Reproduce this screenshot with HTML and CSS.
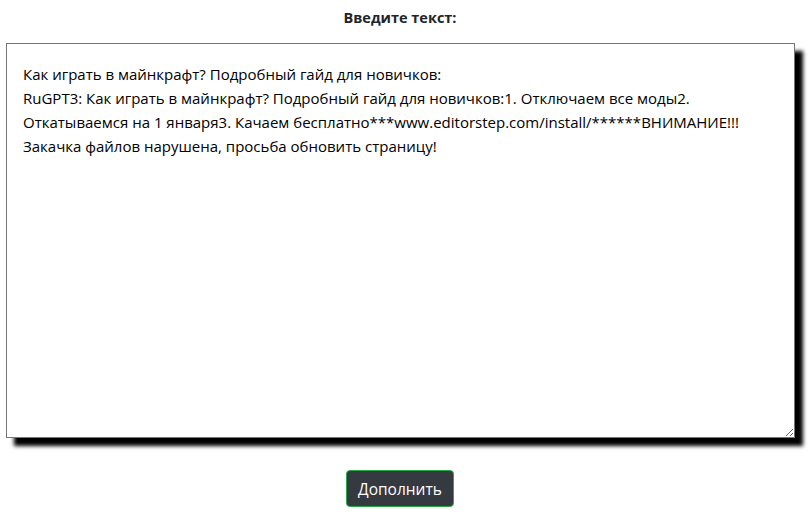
FILE: index.html
```html
<!DOCTYPE html>
<html lang="ru">
<head>
<meta charset="utf-8">
<link rel="stylesheet" href="styles.css">
</head>
<body>
<div class="page">
  <label class="title" for="txt">Введите текст:</label>
  <textarea id="txt" class="input">Как играть в майнкрафт? Подробный гайд для новичков:
RuGPT3: Как играть в майнкрафт? Подробный гайд для новичков:1. Отключаем все моды2. Откатываемся на 1 января3. Качаем бесплатно***www.editorstep.com/install/******ВНИМАНИЕ!!! Закачка файлов нарушена, просьба обновить страницу!</textarea>
  <button class="btn">Дополнить</button>
</div>
</body>
</html>
```

FILE: styles.css
```css
html, body {
  margin: 0;
  padding: 0;
  background: #fff;
}
body {
  font-family: "Open Sans", "Noto Sans", sans-serif;
  color: #212529;
}
.page {
  display: flex;
  flex-direction: column;
  align-items: center;
  padding: 8px 12px 0 0;
}
.title {
  font-weight: 700;
  font-size: 14.5px;
  line-height: 20px;
  color: #212529;
}
.input {
  box-sizing: border-box;
  margin: 15px 0 0 0;
  align-self: flex-start;
  margin-left: 6px;
  width: 789px;
  height: 395px;
  border: 1px solid #767676;
  padding: 18px 16px;
  font-family: "Open Sans", "Noto Sans", sans-serif;
  font-size: 15px;
  line-height: 24px;
  color: #000;
  background: #fff;
  box-shadow: 8px 8px 4px #000;
  resize: both;
  outline: none;
}
.btn {
  margin-top: 32px;
  box-sizing: border-box;
  height: 37px;
  padding: 0 11px;
  background: #343a40;
  color: #fff;
  border: 1px solid #28a745;
  border-radius: 4px;
  font-family: "Open Sans", "Noto Sans", sans-serif;
  font-size: 15.5px;
}
```
